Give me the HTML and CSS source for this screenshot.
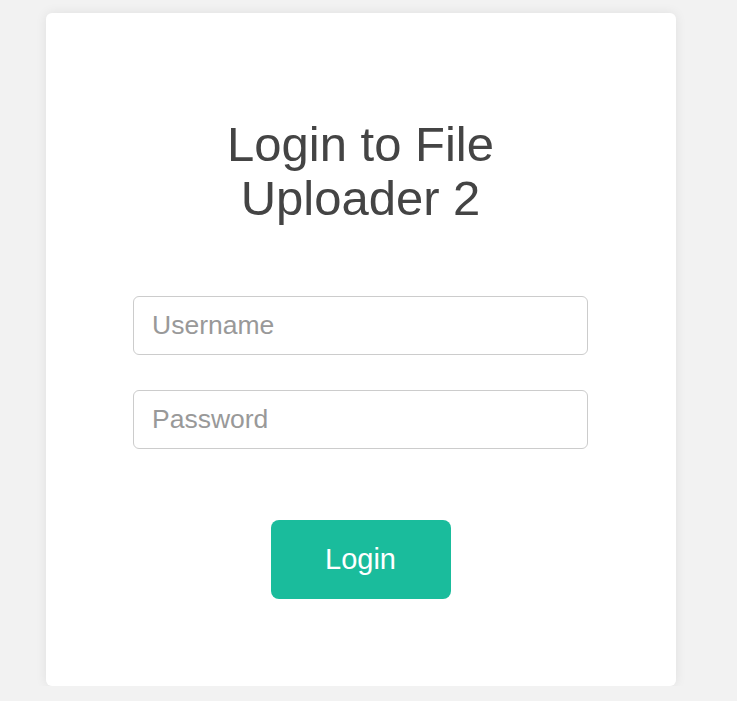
FILE: index.html
```html
<!DOCTYPE html>
<html lang="en">
    <head>
        <meta charset="UTF-8" />
        <title>Login</title>
        <link rel="stylesheet" href="styles.css">
    </head>
    <body>
        <div class="card">
            <h1 class="title">Login to File Uploader 2</h1>

            <form class="login-form">
                <input type="text" class="field" placeholder="Username" />
                <input type="password" class="field" placeholder="Password" />
                <button type="submit" class="btn-login">Login</button>
            </form>
        </div>
    </body>
</html>
```

FILE: styles.css
```css
body {
  margin: 0;
  background-color: #f2f2f2;
  font-family: "Liberation Sans", Arial, sans-serif;
}

.card {
  box-sizing: border-box;
  width: 630px;
  height: 673px;
  margin: 13px 0 0 46px;
  padding: 104px 0 0 87px;
  background-color: #fff;
  border-radius: 6px;
  box-shadow: 0 0 12px rgba(0, 0, 0, 0.08);
}

.title {
  width: 455px;
  margin: 0;
  font-size: 49px;
  font-weight: normal;
  line-height: 54px;
  text-align: center;
  color: #444;
}

.login-form {
  display: flex;
  flex-direction: column;
  width: 455px;
  margin-top: 71px;
}

.field {
  box-sizing: border-box;
  width: 100%;
  height: 59px;
  margin-bottom: 35px;
  padding: 0 18px;
  border: 1px solid #ccc;
  border-radius: 6px;
  font-family: inherit;
  font-size: 26.5px;
  color: #444;
  outline: none;
}

.field::placeholder {
  color: #999;
}

.field + .field {
  margin-bottom: 71px;
}

.btn-login {
  align-self: center;
  width: 180px;
  height: 79px;
  border: none;
  border-radius: 8px;
  background-color: #1abc9c;
  color: #fff;
  font-family: inherit;
  font-size: 29px;
  cursor: pointer;
}
```
